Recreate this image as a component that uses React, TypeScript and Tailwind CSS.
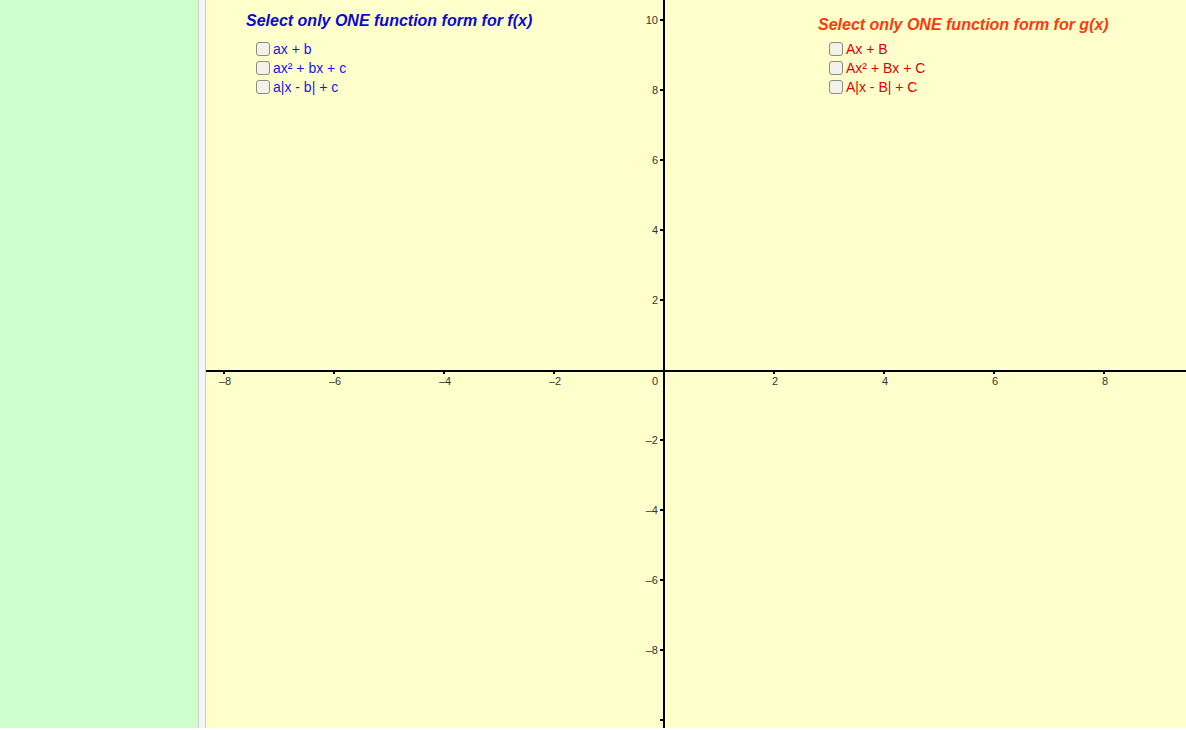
import React from 'react';

const OX = 664; // origin x on page
const OY = 370; // origin y on page
const UX = 55;
const UY = 35;
const LEFT = 206;

function Check({ label, color }: { label: string; color: string }) {
  return (
    <div className="flex items-center h-[19px]">
      <span className="inline-block w-[14px] h-[14px] rounded-[3px] border-[1.5px] border-[#8c8c80] bg-[#f2f2ea] mr-[3px]" />
      <span className={`text-[14px] leading-none ${color}`}>{label}</span>
    </div>
  );
}

function Axes() {
  const xs = [-8, -6, -4, -2, 2, 4, 6, 8];
  const ys = [10, 8, 6, 4, 2, -2, -4, -6, -8];
  return (
    <svg className="absolute inset-0" width={980} height={728} style={{ fontFamily: '"Liberation Sans", Arial, sans-serif' }}>
      <g transform={`translate(${-LEFT},0)`}>
        <rect x={LEFT} y={OY} width={1186 - LEFT} height={2} fill="#000" />
        <rect x={OX - 1} y={0} width={2} height={728} fill="#000" />
        {xs.map((k) => {
          const cx = OX + k * UX;
          return (
            <g key={k}>
              <rect x={cx - 1} y={OY + 2} width={2} height={2} fill="#000" />
              <text x={cx + 1} y={385} fontSize={11} fill="#333" textAnchor="middle">
                {k < 0 ? `\u2013${-k}` : k}
              </text>
            </g>
          );
        })}
        <text x={655} y={385} fontSize={11} fill="#333" textAnchor="middle">0</text>
        {ys.map((k) => {
          const cy = OY - k * UY;
          return (
            <g key={k}>
              <rect x={OX - 4} y={cy - 1} width={3} height={2} fill="#000" />
              <text x={658} y={cy + 4} fontSize={11} fill="#333" textAnchor="end">
                {k < 0 ? `\u2013${-k}` : k}
              </text>
            </g>
          );
        })}
        <rect x={OX - 4} y={OY + 350 - 1} width={3} height={2} fill="#000" />
      </g>
    </svg>
  );
}

export default function App() {
  return (
    <div className="flex w-[1186px] h-[728px] bg-white" style={{ fontFamily: '"Liberation Sans", Arial, sans-serif' }}>
      <div className="w-[198px] h-full bg-[#ccffcc]" />
      <div className="w-[8px] h-full bg-[#f5f5f5] border-x border-[#cfcfcf]" />
      <div className="relative flex-1 h-full bg-[#ffffcc] overflow-hidden">
        <Axes />
        <div className="absolute left-[40px] top-[11px]">
          <div className="text-[16px] font-bold italic text-[#0a0ad0] leading-[20px]">
            Select only ONE function form for f(x)
          </div>
          <div className="mt-[8px] ml-[10px]">
            <Check label="ax + b" color="text-[#1515f0]" />
            <Check label="ax² + bx + c" color="text-[#1515f0]" />
            <Check label="a|x - b| + c" color="text-[#1515f0]" />
          </div>
        </div>
        <div className="absolute left-[612px] top-[15px]">
          <div className="text-[16px] font-bold italic text-[#ff3a0a] leading-[20px]">
            Select only ONE function form for g(x)
          </div>
          <div className="mt-[4px] ml-[11px]">
            <Check label="Ax + B" color="text-[#e00000]" />
            <Check label="Ax² + Bx + C" color="text-[#e00000]" />
            <Check label="A|x - B| + C" color="text-[#e00000]" />
          </div>
        </div>
      </div>
    </div>
  );
}
